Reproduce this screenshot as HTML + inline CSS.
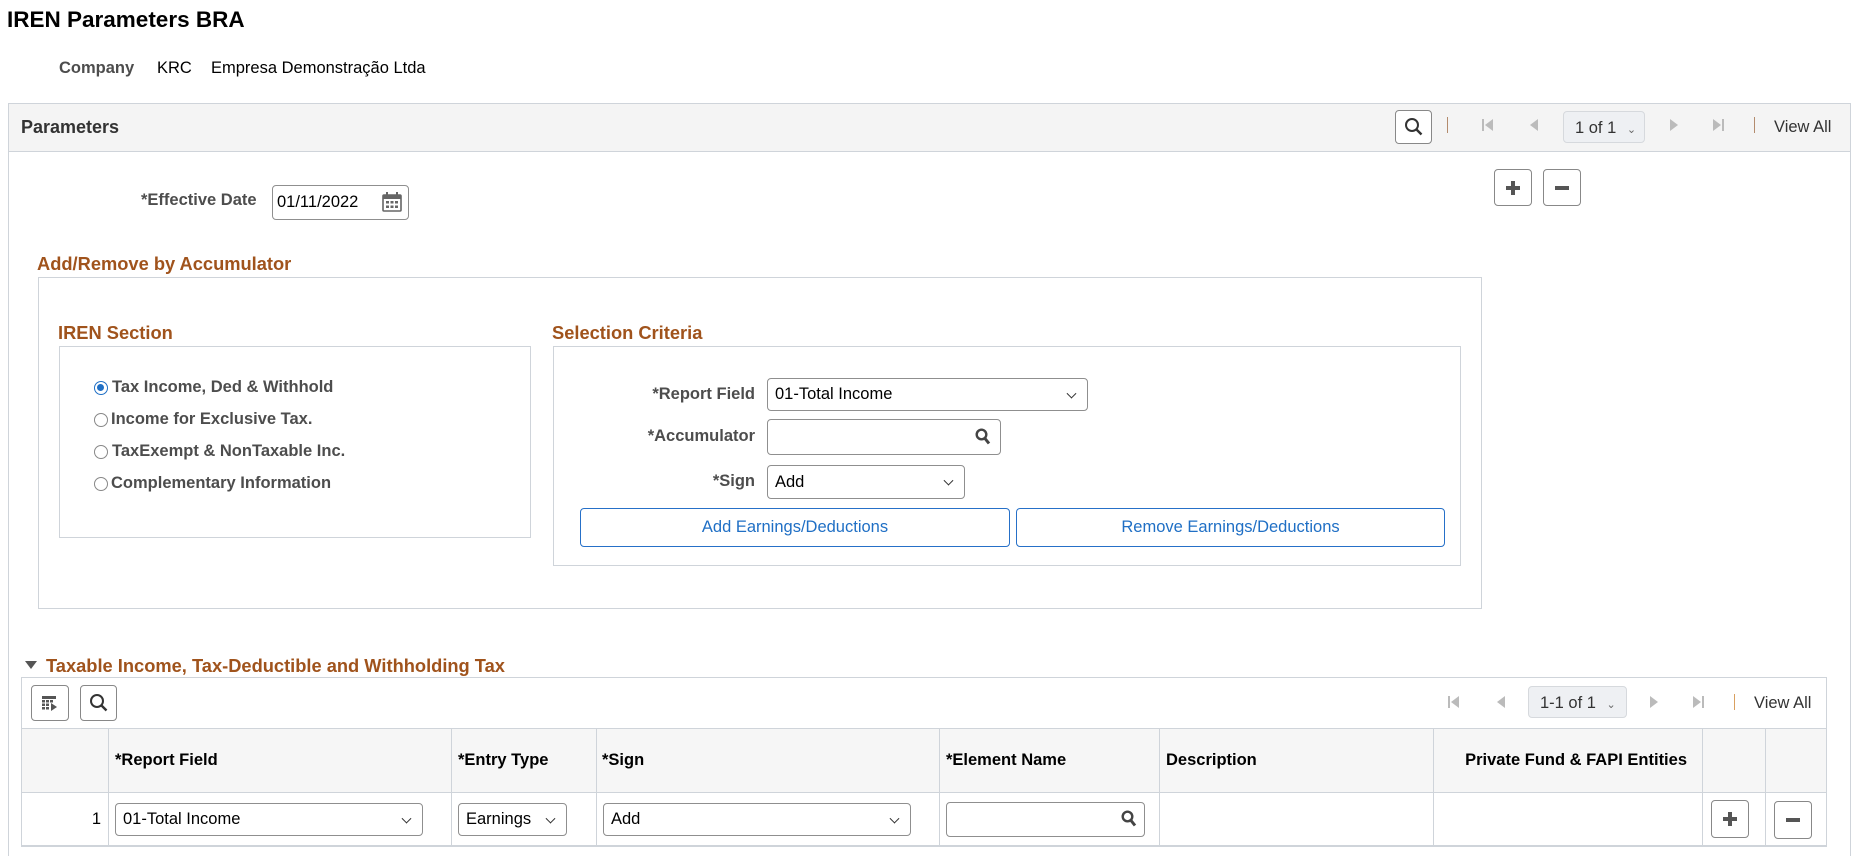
<!DOCTYPE html>
<html><head><meta charset="utf-8"><style>
*{box-sizing:border-box;margin:0;padding:0}
html,body{width:1862px;height:856px;overflow:hidden}
body{background:#fff;font-family:"Liberation Sans",Arial,sans-serif;color:#000;position:relative}
.a{position:absolute}
.lbl{font-size:16.5px;font-weight:bold;color:#4d4d4d;white-space:nowrap}
.hd{font-size:18.3px;font-weight:bold;color:#a0531c;white-space:nowrap}
.box{position:absolute;border:1px solid #cfd4da}
.inp{position:absolute;border:1px solid #8f8f8f;border-radius:4px;background:#fff;font-size:16.5px;padding-left:7px;display:flex;align-items:center}
.sel::after{content:"";position:absolute;right:12px;top:50%;width:6px;height:6px;border-right:1.5px solid #333;border-bottom:1.5px solid #333;transform:translateY(-70%) rotate(45deg)}
.btn{position:absolute;border:1px solid #888;border-radius:4px;background:#fff;display:flex;align-items:center;justify-content:center}
.bb{position:absolute;border:1px solid #2670c8;border-radius:4px;color:#1f6fc5;font-size:16.5px;display:flex;align-items:center;justify-content:center}
.th{position:absolute;top:728px;height:65px;display:flex;align-items:center;font-size:16.5px;font-weight:bold;white-space:nowrap}
.vl{position:absolute;width:1px;background:#cfd4da}
</style></head><body>
<div class="a" style="left:7px;top:7px;font-size:22.5px;font-weight:bold">IREN Parameters BRA</div>
<div class="a lbl" style="left:59px;top:59px">Company</div>
<div class="a" style="left:157px;top:59px;font-size:16.5px">KRC</div>
<div class="a" style="left:211px;top:59px;font-size:16.5px">Empresa Demonstração Ltda</div>

<div class="box" style="left:8px;top:103px;width:1843px;height:760px"></div>
<div class="a" style="left:9px;top:104px;width:1841px;height:48px;background:#f4f4f4;border-bottom:1px solid #cfd4da"></div>
<div class="a" style="left:21px;top:117px;font-size:18px;font-weight:bold;color:#333">Parameters</div>
<div class="btn" style="left:1395px;top:110px;width:37px;height:34px"><svg width="20" height="20" viewBox="0 0 20 20"><circle cx="8" cy="8" r="6" fill="none" stroke="#333" stroke-width="2"/><path d="M12.5 12.5l5 5" stroke="#333" stroke-width="2.4"/></svg></div>
<div class="a" style="left:1447px;top:117px;width:1px;height:16px;background:#b38b6d"></div>
<svg class="a" style="left:1482px;top:118px" width="12" height="14"><rect x="0" y="1" width="2" height="12" fill="#bbb"/><path d="M11 1L3 7l8 6z" fill="#bbb"/></svg>
<svg class="a" style="left:1529px;top:118px" width="10" height="14"><path d="M9 1L1 7l8 6z" fill="#bbb"/></svg>
<div class="a" style="left:1563px;top:111px;width:82px;height:32px;border:1px solid #d6d9dd;border-radius:4px;background:#eef0f3;font-size:16.5px;color:#333;padding:7px 0 0 11px">1 of 1 <span style="font-size:11px;color:#666;margin-left:6px">&#8964;</span></div>
<svg class="a" style="left:1669px;top:118px" width="10" height="14"><path d="M1 1l8 6-8 6z" fill="#bbb"/></svg>
<svg class="a" style="left:1712px;top:118px" width="12" height="14"><path d="M1 1l8 6-8 6z" fill="#bbb"/><rect x="10" y="1" width="2" height="12" fill="#bbb"/></svg>
<div class="a" style="left:1754px;top:117px;width:1px;height:16px;background:#b38b6d"></div>
<div class="a" style="left:1774px;top:118px;font-size:16.5px;color:#333">View All</div>

<div class="btn" style="left:1494px;top:169px;width:38px;height:37px"><svg width="18" height="18"><path d="M9 2v14M2 9h14" stroke="#555" stroke-width="4"/></svg></div>
<div class="btn" style="left:1543px;top:169px;width:38px;height:37px"><svg width="18" height="18"><path d="M2 9h14" stroke="#555" stroke-width="4"/></svg></div>

<div class="a lbl" style="left:141px;top:191px">*Effective Date</div>
<div class="inp" style="left:272px;top:185px;width:137px;height:35px;padding-left:4px">01/11/2022</div>
<svg class="a" style="left:381px;top:191px" width="22" height="22" viewBox="0 0 22 22"><rect x="2" y="4" width="18" height="16" rx="1" fill="none" stroke="#666" stroke-width="1.6"/><rect x="2" y="4" width="18" height="4" fill="#666"/><rect x="5" y="1" width="2" height="5" fill="#666"/><rect x="15" y="1" width="2" height="5" fill="#666"/><g fill="#666"><rect x="5" y="10" width="3" height="2.5"/><rect x="9.5" y="10" width="3" height="2.5"/><rect x="14" y="10" width="3" height="2.5"/><rect x="5" y="14.5" width="3" height="2.5"/><rect x="9.5" y="14.5" width="3" height="2.5"/><rect x="14" y="14.5" width="3" height="2.5"/></g></svg>

<div class="a hd" style="left:37px;top:253px">Add/Remove by Accumulator</div>
<div class="box" style="left:38px;top:277px;width:1444px;height:332px"></div>
<div class="a hd" style="left:58px;top:322px">IREN Section</div>
<div class="box" style="left:59px;top:346px;width:472px;height:192px"></div>
<div class="a" style="left:94px;top:381px;width:14px;height:14px;border:1.5px solid #1f6fc5;border-radius:50%"><div style="position:absolute;left:2px;top:2px;width:7px;height:7px;border-radius:50%;background:#1f6fc5"></div></div>
<div class="a" style="left:94px;top:413px;width:14px;height:14px;border:1.5px solid #888;border-radius:50%"></div>
<div class="a" style="left:94px;top:445px;width:14px;height:14px;border:1.5px solid #888;border-radius:50%"></div>
<div class="a" style="left:94px;top:477px;width:14px;height:14px;border:1.5px solid #888;border-radius:50%"></div>
<div class="a lbl" style="left:112px;top:378px">Tax Income, Ded &amp; Withhold</div>
<div class="a lbl" style="left:111px;top:410px">Income for Exclusive Tax.</div>
<div class="a lbl" style="left:112px;top:442px">TaxExempt &amp; NonTaxable Inc.</div>
<div class="a lbl" style="left:111px;top:474px">Complementary Information</div>

<div class="a hd" style="left:552px;top:322px">Selection Criteria</div>
<div class="box" style="left:553px;top:346px;width:908px;height:220px"></div>
<div class="a lbl" style="left:631px;top:385px;width:124px;text-align:right">*Report Field</div>
<div class="inp sel" style="left:767px;top:378px;width:321px;height:33px">01-Total Income</div>
<div class="a lbl" style="left:611px;top:427px;width:144px;text-align:right">*Accumulator</div>
<div class="inp" style="left:767px;top:419px;width:234px;height:36px"></div>
<svg class="a" style="left:975px;top:428px" width="16" height="18" viewBox="0 0 16 18"><circle cx="6.5" cy="6.5" r="4.8" fill="none" stroke="#444" stroke-width="2.4"/><path d="M10 10.5l4 5" stroke="#444" stroke-width="3"/></svg>
<div class="a lbl" style="left:681px;top:472px;width:74px;text-align:right">*Sign</div>
<div class="inp sel" style="left:767px;top:465px;width:198px;height:34px">Add</div>
<div class="bb" style="left:580px;top:508px;width:430px;height:39px">Add Earnings/Deductions</div>
<div class="bb" style="left:1016px;top:508px;width:429px;height:39px">Remove Earnings/Deductions</div>

<svg class="a" style="left:24px;top:660px" width="14" height="10"><path d="M1 1h12L7 9z" fill="#555"/></svg>
<div class="a hd" style="left:46px;top:655px">Taxable Income, Tax-Deductible and Withholding Tax</div>
<div class="box" style="left:21px;top:677px;width:1806px;height:170px"></div>
<div class="btn" style="left:31px;top:685px;width:38px;height:36px"><svg width="20" height="18" viewBox="0 0 20 18"><g fill="#555"><rect x="2" y="2" width="14" height="3"/><rect x="2" y="6" width="3" height="2.5"/><rect x="6" y="6" width="3" height="2.5"/><rect x="10" y="6" width="3" height="2.5"/><rect x="2" y="9.5" width="3" height="2.5"/><rect x="6" y="9.5" width="3" height="2.5"/><rect x="2" y="13" width="3" height="2.5"/><rect x="6" y="13" width="3" height="2.5"/><path d="M11 9l6 4-6 4z"/></g></svg></div>
<div class="btn" style="left:80px;top:685px;width:37px;height:36px"><svg width="20" height="20" viewBox="0 0 20 20"><circle cx="8" cy="8" r="6" fill="none" stroke="#333" stroke-width="2"/><path d="M12.5 12.5l5 5" stroke="#333" stroke-width="2.4"/></svg></div>
<svg class="a" style="left:1448px;top:695px" width="12" height="14"><rect x="0" y="1" width="2" height="12" fill="#bbb"/><path d="M11 1L3 7l8 6z" fill="#bbb"/></svg>
<svg class="a" style="left:1496px;top:695px" width="10" height="14"><path d="M9 1L1 7l8 6z" fill="#bbb"/></svg>
<div class="a" style="left:1528px;top:686px;width:99px;height:32px;border:1px solid #d6d9dd;border-radius:4px;background:#eef0f3;font-size:16.5px;color:#333;padding:7px 0 0 11px">1-1 of 1 <span style="font-size:11px;color:#666;margin-left:6px">&#8964;</span></div>
<svg class="a" style="left:1649px;top:695px" width="10" height="14"><path d="M1 1l8 6-8 6z" fill="#bbb"/></svg>
<svg class="a" style="left:1692px;top:695px" width="12" height="14"><path d="M1 1l8 6-8 6z" fill="#bbb"/><rect x="10" y="1" width="2" height="12" fill="#bbb"/></svg>
<div class="a" style="left:1734px;top:694px;width:1px;height:16px;background:#d9a060"></div>
<div class="a" style="left:1754px;top:694px;font-size:16.5px;color:#333">View All</div>

<div class="a" style="left:22px;top:728px;width:1804px;height:65px;background:#f6f6f6;border-top:1px solid #cfd4da;border-bottom:1px solid #cfd4da"></div>
<div class="a" style="left:22px;top:845px;width:1804px;height:2px;background:#cfd4da"></div>
<div class="vl" style="left:108px;top:728px;height:118px"></div>
<div class="vl" style="left:451px;top:728px;height:118px"></div>
<div class="vl" style="left:596px;top:728px;height:118px"></div>
<div class="vl" style="left:939px;top:728px;height:118px"></div>
<div class="vl" style="left:1159px;top:728px;height:118px"></div>
<div class="vl" style="left:1433px;top:728px;height:118px"></div>
<div class="vl" style="left:1702px;top:728px;height:118px"></div>
<div class="vl" style="left:1765px;top:728px;height:118px"></div>
<div class="th" style="left:115px">*Report Field</div>
<div class="th" style="left:458px">*Entry Type</div>
<div class="th" style="left:602px">*Sign</div>
<div class="th" style="left:946px">*Element Name</div>
<div class="th" style="left:1166px">Description</div>
<div class="th" style="left:1433px;width:254px;justify-content:flex-end">Private Fund &amp; FAPI Entities</div>

<div class="a" style="left:80px;top:810px;width:21px;text-align:right;font-size:16.5px">1</div>
<div class="inp sel" style="left:115px;top:803px;width:308px;height:33px">01-Total Income</div>
<div class="inp sel" style="left:458px;top:803px;width:109px;height:33px">Earnings</div>
<div class="inp sel" style="left:603px;top:803px;width:308px;height:33px">Add</div>
<div class="inp" style="left:946px;top:802px;width:199px;height:35px"></div>
<svg class="a" style="left:1121px;top:810px" width="16" height="18" viewBox="0 0 16 18"><circle cx="6.5" cy="6.5" r="4.8" fill="none" stroke="#444" stroke-width="2.4"/><path d="M10 10.5l4 5" stroke="#444" stroke-width="3"/></svg>
<div class="btn" style="left:1711px;top:800px;width:38px;height:38px"><svg width="18" height="18"><path d="M9 2v14M2 9h14" stroke="#555" stroke-width="4"/></svg></div>
<div class="btn" style="left:1774px;top:801px;width:38px;height:38px"><svg width="18" height="18"><path d="M2 9h14" stroke="#555" stroke-width="4"/></svg></div>
</body></html>
